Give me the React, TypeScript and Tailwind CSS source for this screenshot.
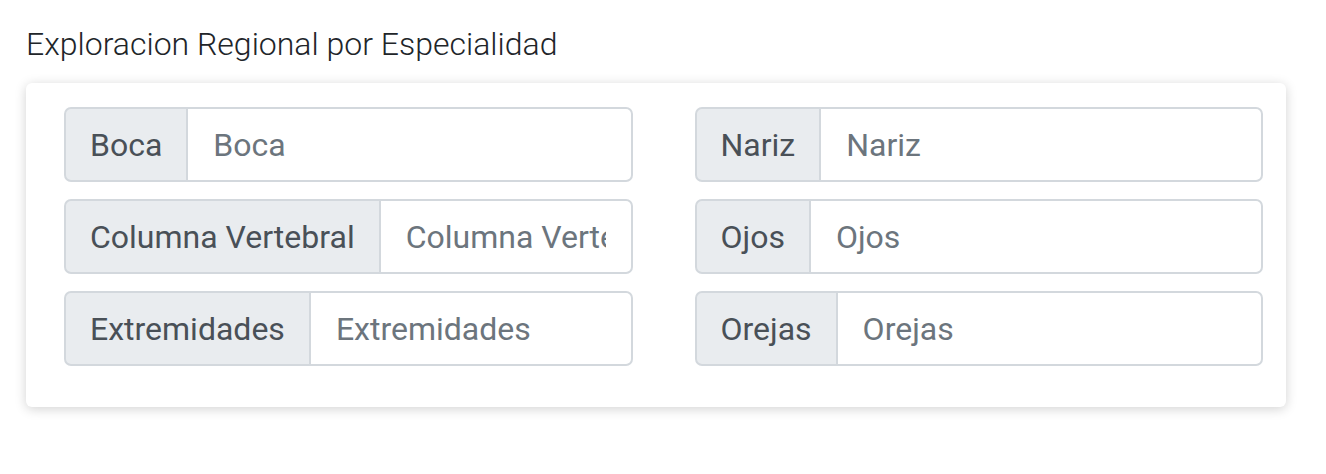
const fields: [string, string][] = [
  ["Boca", "Nariz"],
  ["Columna Vertebral", "Ojos"],
  ["Extremidades", "Orejas"],
];

function Field({ label }: { label: string }) {
  return (
    <div className="flex h-[75px] w-full">
      <span className="flex items-center px-[24px] bg-[#e9ecef] border-2 border-[#d3d8dd] rounded-l-[7px] text-[#495057] whitespace-nowrap">
        {label}
      </span>
      <input
        className="flex-1 min-w-0 px-[25px] border-2 border-l-0 border-[#d3d8dd] rounded-r-[7px] bg-white text-[#495057] placeholder:text-[#6c757d] outline-none"
        placeholder={label}
      />
    </div>
  );
}

export default function App() {
  return (
    <div
      className="bg-white w-[1326px] h-[474px] pt-[28px] pl-[26px]"
      style={{ fontFamily: "Roboto, 'Liberation Sans', sans-serif" }}
    >
      <h2 className="text-[32px] font-light text-[#212529] leading-none h-[55px]">
        Exploracion Regional por Especialidad
      </h2>
      <div className="w-[1260px] bg-white rounded-[6px] shadow-[0_2px_12px_rgba(0,0,0,0.18)] pt-[24px] pb-[24px] pl-[38px] pr-[23px] text-[32px]">
        <div className="grid grid-cols-2 gap-x-[62px]">
          {fields.map(([a, b]) => (
            <div key={a} className="contents">
              <div className="mb-[17px]">
                <Field label={a} />
              </div>
              <div className="mb-[17px]">
                <Field label={b} />
              </div>
            </div>
          ))}
        </div>
      </div>
    </div>
  );
}
